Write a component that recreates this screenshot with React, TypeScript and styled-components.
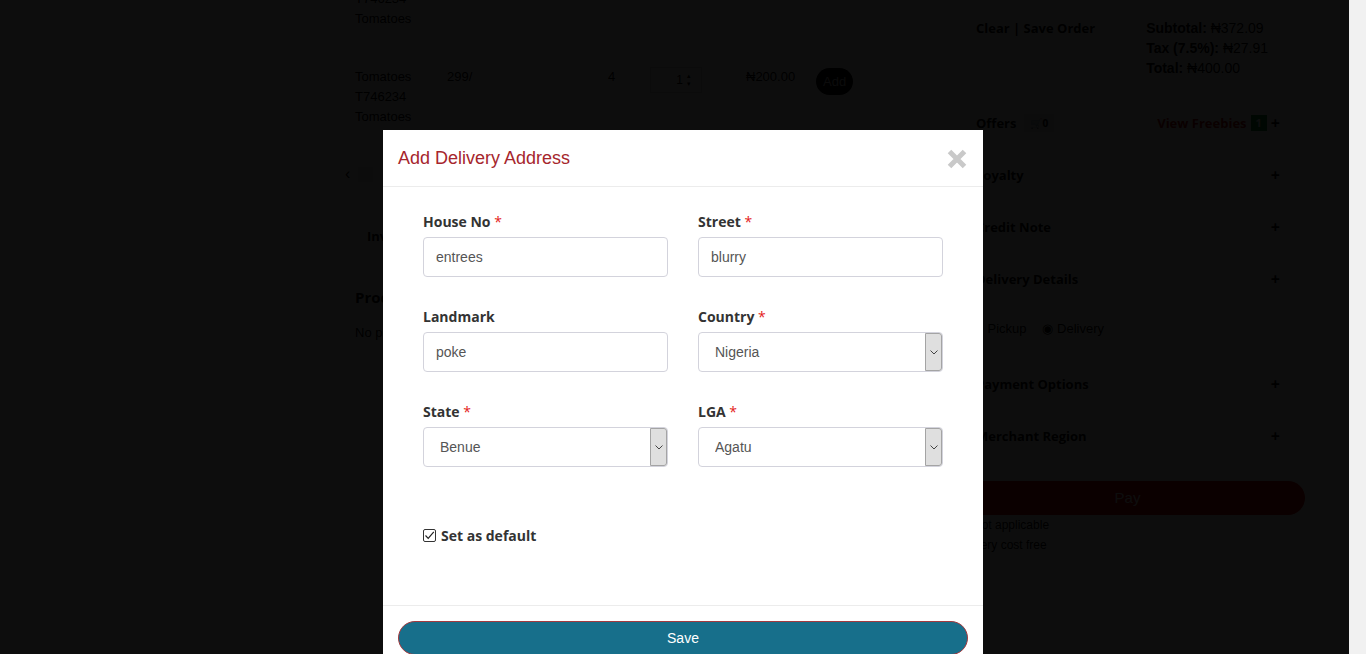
import React from 'react';
import styled, { createGlobalStyle } from 'styled-components';

const GlobalStyle = createGlobalStyle`
  html, body {
    margin: 0;
    height: 100%;
    overflow: hidden;
    background: #fff;
  }
  body {
    font-family: 'Liberation Sans', Arial, sans-serif;
    color: #000;
  }
`;

type Item = { name: string; code: string; sku: string; stock: string; qty: number; price: string };

const items: Item[] = [
  { name: 'Tomatoes', code: '299/', sku: 'T746234', stock: '4', qty: 1, price: '₦200.00' },
  { name: 'Tomatoes', code: '299/', sku: 'T746234', stock: '4', qty: 1, price: '₦200.00' },
];

const sections = ['Loyalty', 'Credit Note', 'Delivery Details'];
const sectionsAfter = ['Payment Options', 'Merchant Region'];

function CloseIcon() {
  return (
    <svg width="20" height="20" viewBox="0 0 20 20">
      <path d="M2.5 2.5 L17.5 17.5 M17.5 2.5 L2.5 17.5" stroke="#c9c9c9" strokeWidth="5" />
    </svg>
  );
}

function Chevron() {
  return (
    <svg width="8" height="5" viewBox="0 0 8 5">
      <path d="M0.5 0.5 L4 4 L7.5 0.5" stroke="#444" strokeWidth="1" fill="none" />
    </svg>
  );
}

function SelectField({ value }: { value: string }) {
  return (
    <SelectWrap>
      <Select defaultValue={value}>
        <option>{value}</option>
      </Select>
      <ArrowBox>
        <Chevron />
      </ArrowBox>
    </SelectWrap>
  );
}

function App() {
  return (
    <>
      <GlobalStyle />
      <Main>
        <Center>
          {items.map((item, i) => (
            <ProductRow key={i}>
              <Cell>
                <div>{item.name}</div>
                <div>{item.sku}</div>
                <div>{item.name}</div>
              </Cell>
              <Cell>{item.code}</Cell>
              <Cell>{item.stock}</Cell>
              <Cell>
                <QtyBox>
                  {item.qty}
                  <Spin>
                    <span>▴</span>
                    <span>▾</span>
                  </Spin>
                </QtyBox>
              </Cell>
              <Cell>{item.price}</Cell>
              <Cell>
                <AddButton>Add</AddButton>
              </Cell>
            </ProductRow>
          ))}
          <Pager>
            <span>‹</span>
            <PagerBox />
          </Pager>
          <TabTitle>Invoices</TabTitle>
          <BlockTitle>Products</BlockTitle>
          <Muted>No products found</Muted>
        </Center>
        <Side>
          <TopSummary>
            <Heading>Clear | Save Order</Heading>
            <Totals>
              <div><b>Subtotal:</b> ₦372.09</div>
              <div><b>Tax (7.5%):</b> ₦27.91</div>
              <div><b>Total:</b> ₦400.00</div>
            </Totals>
          </TopSummary>
          <OffersRow>
            <Heading>
              Offers <CartBadge>🛒0</CartBadge>
            </Heading>
            <Freebies>
              View Freebies <GreenBadge>1</GreenBadge>
              <Plus>+</Plus>
            </Freebies>
          </OffersRow>
          {sections.map(s => (
            <SectionRow key={s}>
              <Heading>{s}</Heading>
              <Plus>+</Plus>
            </SectionRow>
          ))}
          <Radios>
            <span>○ Pickup</span>
            <span>◉ Delivery</span>
          </Radios>
          {sectionsAfter.map((s, i) => (
            <SectionRow key={s} $gap={i === 0 ? 35 : 32}>
              <Heading>{s}</Heading>
              <Plus>+</Plus>
            </SectionRow>
          ))}
          <PayButton>Pay</PayButton>
          <Note $indent={13}>Not applicable</Note>
          <Note $indent={-6}>Delivery cost free</Note>
        </Side>
      </Main>
      <Backdrop />
      <ScrollTrack />
      <ModalLayer>
        <Modal>
          <Header>
            <Title>Add Delivery Address</Title>
            <CloseButton type="button">
              <CloseIcon />
            </CloseButton>
          </Header>
          <Body>
            <FormGrid>
              <Field>
                <Label>
                  House No <Req>*</Req>
                </Label>
                <Input defaultValue="entrees" />
              </Field>
              <Field>
                <Label>
                  Street <Req>*</Req>
                </Label>
                <Input defaultValue="blurry" />
              </Field>
              <Field>
                <Label>Landmark</Label>
                <Input defaultValue="poke" />
              </Field>
              <Field>
                <Label>
                  Country <Req>*</Req>
                </Label>
                <SelectField value="Nigeria" />
              </Field>
              <Field>
                <Label>
                  State <Req>*</Req>
                </Label>
                <SelectField value="Benue" />
              </Field>
              <Field>
                <Label>
                  LGA <Req>*</Req>
                </Label>
                <SelectField value="Agatu" />
              </Field>
            </FormGrid>
            <CheckRow>
              <CheckBox>
                <svg width="11" height="11" viewBox="0 0 11 11">
                  <path d="M1.5 5.5 L4.2 8.3 L9.8 1.8" stroke="#222" strokeWidth="1.2" fill="none" />
                </svg>
              </CheckBox>
              <CheckLabel>Set as default</CheckLabel>
            </CheckRow>
          </Body>
          <Footer>
            <SaveButton type="button">Save</SaveButton>
          </Footer>
        </Modal>
      </ModalLayer>
    </>
  );
}

export default App;

/* background page */

const Main = styled.div`
  display: flex;
  height: 100vh;
  padding-left: 355px;
  font-size: 13px;
  overflow: hidden;
`;

const Center = styled.div`
  flex: none;
  width: 590px;
  margin-top: -31px;
`;

const ProductRow = styled.div`
  display: grid;
  grid-template-columns: 92px 161px 42px 96px 70px auto;
  margin-bottom: 38px;
  line-height: 20px;
`;

const Cell = styled.div`
  display: flex;
  flex-direction: column;
  align-items: flex-start;
`;

const QtyBox = styled.div`
  display: flex;
  align-items: center;
  justify-content: flex-end;
  gap: 4px;
  width: 40px;
  height: 24px;
  padding-right: 10px;
  border: 1px solid #ccc;
  font-size: 12px;
`;

const Spin = styled.span`
  display: flex;
  flex-direction: column;
  font-size: 7px;
  line-height: 8px;
`;

const AddButton = styled.button`
  margin-top: 1px;
  height: 27px;
  padding: 0 7px;
  border: none;
  border-radius: 14px;
  background: #000;
  color: #ccc;
  font-family: 'Liberation Sans', Arial, sans-serif;
  font-size: 13px;
`;

const Pager = styled.div`
  display: flex;
  align-items: center;
  gap: 8px;
  margin: 7px 0 0 -10px;
  font-size: 16px;
`;

const PagerBox = styled.span`
  width: 15px;
  height: 15px;
  background: #e8e8e8;
`;

const TabTitle = styled.div`
  margin: 44px 0 0 12px;
  font-family: 'Open Sans', sans-serif;
  font-weight: 700;
  font-size: 13px;
`;

const BlockTitle = styled.div`
  margin-top: 42px;
  font-family: 'Open Sans', sans-serif;
  font-weight: 700;
  font-size: 15px;
`;

const Muted = styled.div`
  margin-top: 18px;
`;

const Side = styled.div`
  flex: none;
  width: 345px;
  margin-left: 15px;
  padding-top: 18px;
`;

const TopSummary = styled.div`
  display: flex;
  align-items: flex-start;
  padding-left: 16px;
`;

const Heading = styled.div`
  font-family: 'Open Sans', sans-serif;
  font-weight: 700;
  font-size: 13px;
  line-height: 20px;
  display: flex;
  align-items: center;
  gap: 8px;
`;

const Totals = styled.div`
  margin-left: 51px;
  font-size: 14px;
  line-height: 20px;
`;

const OffersRow = styled.div`
  display: flex;
  align-items: center;
  justify-content: space-between;
  height: 20px;
  margin-top: 35px;
  padding: 0 25px 0 16px;
`;

const CartBadge = styled.span`
  padding: 2px 6px;
  background: #ddd;
  font-size: 10px;
  line-height: 14px;
`;

const Freebies = styled.div`
  display: flex;
  align-items: center;
  gap: 4px;
  font-family: 'Open Sans', sans-serif;
  font-weight: 700;
  font-size: 13px;
  color: #b00;
`;

const GreenBadge = styled.span`
  padding: 1px 5px;
  background: #0a8a2a;
  color: #fff;
  font-size: 11px;
  line-height: 14px;
`;

const Plus = styled.span`
  font-family: 'Open Sans', sans-serif;
  font-weight: 700;
  font-size: 16px;
  line-height: 20px;
  color: #000;
`;

const SectionRow = styled.div<{ $gap?: number }>`
  display: flex;
  justify-content: space-between;
  height: 20px;
  margin-top: ${p => p.$gap ?? 32}px;
  padding: 0 25px 0 16px;
`;

const Radios = styled.div`
  display: flex;
  gap: 16px;
  margin-top: 30px;
  padding-left: 16px;
  font-size: 13px;
  line-height: 20px;
`;

const PayButton = styled.div`
  margin: 35px 0 0 -10px;
  height: 34px;
  border-radius: 17px;
  background: #c00;
  color: #fff;
  font-size: 15px;
  line-height: 34px;
  text-align: center;
`;

const Note = styled.div<{ $indent: number }>`
  margin-left: ${p => p.$indent}px;
  font-size: 12px;
  line-height: 20px;
`;

/* overlay + modal */

const Backdrop = styled.div`
  position: fixed;
  top: 0;
  left: 0;
  width: calc(100vw - 17px);
  height: 100vh;
  background: rgba(0, 0, 0, 0.95);
  z-index: 10;
`;

const ScrollTrack = styled.div`
  position: fixed;
  top: 0;
  right: 0;
  width: 17px;
  height: 100vh;
  background: #f1f1f1;
  z-index: 20;
`;

const ModalLayer = styled.div`
  position: fixed;
  top: 0;
  left: 0;
  width: 100vw;
  height: 100vh;
  display: flex;
  justify-content: center;
  align-items: flex-start;
  padding-top: 130px;
  box-sizing: border-box;
  z-index: 30;
  pointer-events: none;
`;

const Modal = styled.div`
  width: 600px;
  flex: none;
  background: #fff;
  pointer-events: auto;
`;

const Header = styled.div`
  display: flex;
  align-items: center;
  justify-content: space-between;
  height: 56px;
  padding: 0 16px 0 15px;
  border-bottom: 1px solid #ececec;
`;

const Title = styled.h4`
  margin: 0;
  font-family: 'Liberation Sans', Arial, sans-serif;
  font-weight: 400;
  font-size: 18px;
  color: #a6262d;
`;

const CloseButton = styled.button`
  display: flex;
  padding: 0;
  margin-top: 1px;
  border: none;
  background: none;
  cursor: pointer;
`;

const Body = styled.div`
  padding: 25px 40px 60px;
`;

const FormGrid = styled.div`
  display: grid;
  grid-template-columns: 1fr 1fr;
  column-gap: 30px;
  row-gap: 30px;
`;

const Field = styled.div`
  display: flex;
  flex-direction: column;
  gap: 5px;
`;

const Label = styled.label`
  font-family: 'Open Sans', sans-serif;
  font-weight: 700;
  font-size: 14px;
  line-height: 20px;
  color: #333;
`;

const Req = styled.span`
  color: #e41b1b;
  font-weight: 400;
`;

const Input = styled.input`
  box-sizing: border-box;
  height: 40px;
  padding: 0 12px;
  border: 1px solid #d3d3dc;
  border-radius: 4px;
  font-family: 'Liberation Sans', Arial, sans-serif;
  font-size: 14px;
  color: #555;
  outline: none;
`;

const SelectWrap = styled.div`
  position: relative;
`;

const Select = styled.select`
  box-sizing: border-box;
  width: 100%;
  height: 40px;
  padding: 0 16px;
  border: 1px solid #d3d3dc;
  border-radius: 4px;
  background: #fff;
  appearance: none;
  font-family: 'Liberation Sans', Arial, sans-serif;
  font-size: 14px;
  color: #555;
  outline: none;
`;

const ArrowBox = styled.span`
  position: absolute;
  top: 1px;
  right: 1px;
  bottom: 1px;
  width: 15px;
  display: flex;
  align-items: center;
  justify-content: center;
  background: #dfdfdf;
  border: 1px solid #a4a4a4;
  border-radius: 0 3px 3px 0;
  pointer-events: none;
`;

const CheckRow = styled.div`
  display: flex;
  align-items: center;
  gap: 5px;
  margin-top: 58px;
  height: 20px;
`;

const CheckBox = styled.span`
  box-sizing: border-box;
  width: 13px;
  height: 13px;
  display: flex;
  align-items: center;
  justify-content: center;
  border: 1px solid #333;
  border-radius: 2px;
`;

const CheckLabel = styled.span`
  font-family: 'Open Sans', sans-serif;
  font-weight: 700;
  font-size: 14px;
  color: #333;
`;

const Footer = styled.div`
  padding: 15px 15px 20px;
  border-top: 1px solid #ececec;
`;

const SaveButton = styled.button`
  width: 100%;
  height: 34px;
  border: 1px solid #a33a3f;
  border-radius: 17px;
  background: #176f8b;
  color: #fff;
  font-family: 'Liberation Sans', Arial, sans-serif;
  font-size: 14px;
  cursor: pointer;
`;
